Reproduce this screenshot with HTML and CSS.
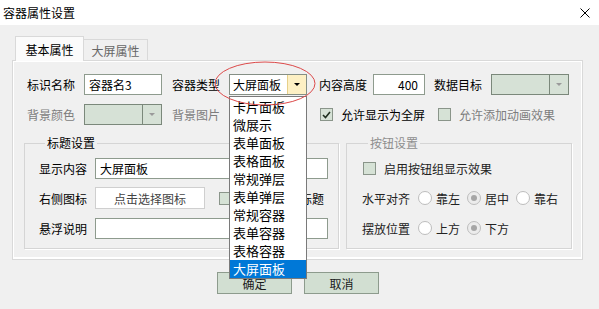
FILE: index.html
```html
<!DOCTYPE html>
<html lang="zh-CN">
<head>
  <meta charset="UTF-8" />
  <title>容器属性设置</title>
  <link rel="stylesheet" href="styles.css">
</head>
<body>
  <div class="titlebar">
    <span>容器属性设置</span>
    <svg class="close" width="10" height="10" viewBox="0 0 10 10"><path d="M0.5 0.5L9.5 9.5M9.5 0.5L0.5 9.5" stroke="#000" stroke-width="1"/></svg>
  </div>

  <div class="dialog">
    <div class="tabs">
      <div class="tab active">基本属性</div>
      <div class="tab">大屏属性</div>
    </div>

    <div class="panel">
      <div class="row">
        <span class="lbl">标识名称</span>
        <input class="field w78 ml9" type="text" value="容器名3" />
        <span class="lbl ml10">容器类型</span>
        <div class="combo open w78 ml9">
          <span class="combo-text">大屏面板</span>
          <span class="combo-btn"><i class="arrow"></i></span>
          <ul class="droplist">
            <li>卡片面板</li>
            <li>微展示</li>
            <li>表单面板</li>
            <li>表格面板</li>
            <li>常规弹层</li>
            <li>表单弹层</li>
            <li>常规容器</li>
            <li>表单容器</li>
            <li>表格容器</li>
            <li class="selected">大屏面板</li>
          </ul>
        </div>
        <span class="lbl ml12">内容高度</span>
        <input class="field num ml6" type="text" value="400" />
        <span class="lbl ml9">数据目标</span>
        <div class="combo disabled w78 ml9">
          <span class="combo-text"></span>
          <span class="combo-btn"><i class="arrow"></i></span>
        </div>
      </div>

      <div class="row row2">
        <span class="lbl muted">背景颜色</span>
        <div class="combo disabled w78 ml9">
          <span class="combo-text"></span>
          <span class="combo-btn"><i class="arrow"></i></span>
        </div>
        <span class="lbl muted ml10">背景图片</span>
        <span class="spacer w78 ml9"></span>
        <span class="chk checked ml13"><svg width="9" height="8" viewBox="0 0 9 8"><path d="M1 4L3.5 6.5L8 1" fill="none" stroke="#1f2f1f" stroke-width="1.6"/></svg></span>
        <span class="ml8">允许显示为全屏</span>
        <span class="chk ml13"></span>
        <span class="muted ml8">允许添加动画效果</span>
      </div>

      <div class="groups">
        <fieldset class="grp grp-title">
          <legend>标题设置</legend>
          <div class="grow">
            <span class="lbl">显示内容</span>
            <input class="field wide ml8" type="text" value="大屏面板" />
          </div>
          <div class="grow">
            <span class="lbl">右侧图标</span>
            <button class="pick ml8">点击选择图标</button>
            <span class="chk ml14"></span>
            <span class="ml8">图标显示在标题</span>
          </div>
          <div class="grow">
            <span class="lbl">悬浮说明</span>
            <input class="field wide ml8" type="text" value="" />
          </div>
        </fieldset>

        <fieldset class="grp grp-btn">
          <legend>按钮设置</legend>
          <div class="grow">
            <span class="chk ml1"></span>
            <span class="ml8">启用按钮组显示效果</span>
          </div>
          <div class="grow">
            <span class="lbl">水平对齐</span>
            <span class="opt first"><span class="radio"></span>靠左</span>
            <span class="opt"><span class="radio on"></span>居中</span>
            <span class="opt"><span class="radio"></span>靠右</span>
          </div>
          <div class="grow">
            <span class="lbl">摆放位置</span>
            <span class="opt first"><span class="radio"></span>上方</span>
            <span class="opt"><span class="radio on"></span>下方</span>
          </div>
        </fieldset>
      </div>
    </div>

    <div class="actions">
      <button class="btn">确定</button>
      <button class="btn">取消</button>
    </div>
  </div>

  <!-- 标注圈 -->
  <svg class="mark" width="599" height="309" viewBox="0 0 599 309">
    <ellipse cx="265" cy="83.5" rx="50" ry="21.5" fill="none" stroke="#dc4a4a" stroke-width="1"/>
  </svg>
</body>
</html>
```

FILE: styles.css
```css
body {
  margin: 0;
  width: 599px;
  height: 309px;
  overflow: hidden;
  position: relative;
  background: #f0f0f0;
  color: #000;
  font-family: "Noto Sans CJK SC", "Microsoft YaHei", sans-serif;
  font-size: 12px;
}
input, button {
  font: inherit;
  margin: 0;
}
.titlebar {
  height: 25px;
  background: #fff;
  display: flex;
  align-items: center;
  justify-content: space-between;
  padding: 0 9px 0 3px;
}
.dialog {
  padding: 11px 16px 0 12px;
}
.tabs {
  display: flex;
  align-items: flex-end;
  height: 24px;
  padding-left: 3px;
}
.tab {
  box-sizing: border-box;
  width: 65px;
  height: 21px;
  margin-left: -1px;
  border: 1px solid #d9d9d9;
  border-bottom: none;
  background: #f0f0f0;
  color: #666;
  display: flex;
  align-items: center;
  justify-content: center;
}
.tab.active {
  width: 69px;
  height: 25px;
  margin-left: 0;
  margin-bottom: -1px;
  background: #fbfbfb;
  color: #000;
  position: relative;
  z-index: 1;
}
.panel {
  box-sizing: border-box;
  height: 200px;
  border: 1px solid #d9d9d9;
  box-shadow: inset 1px 1px 0 #fff, inset -1px -2px 0 #fff;
  padding: 13px 0 0 11px;
}
.row {
  display: flex;
  align-items: center;
  height: 21px;
  padding-left: 3px;
  white-space: nowrap;
}
.row2 {
  margin-top: 9px;
}
.lbl {
  width: 48px;
  flex: none;
}
.muted { color: #7d7d7d; }
.ml1 { margin-left: 1px; }
.ml6 { margin-left: 6px; }
.ml8 { margin-left: 8px; }
.ml9 { margin-left: 9px; }
.ml10 { margin-left: 10px; }
.ml12 { margin-left: 12px; }
.ml13 { margin-left: 13px; }
.ml14 { margin-left: 14px; }
.w78 { width: 78px; flex: none; }
.spacer { height: 21px; }
.field {
  box-sizing: border-box;
  height: 21px;
  border: 1px solid #8e9b8e;
  background: #fff;
  padding: 0 4px;
  outline: none;
}
.field.num {
  width: 52px;
  text-align: right;
  padding-right: 6px;
}
.field.wide {
  width: 233px;
}
.combo {
  box-sizing: border-box;
  height: 21px;
  border: 1px solid #858f85;
  display: flex;
  position: relative;
  background: #fff;
}
.combo-text {
  flex: 1;
  padding-left: 3px;
  line-height: 19px;
}
.combo-btn {
  width: 18px;
  border-left: 1px solid #858f85;
  display: flex;
  align-items: center;
  justify-content: center;
}
.arrow {
  width: 0;
  height: 0;
  border-left: 3px solid transparent;
  border-right: 3px solid transparent;
  border-top: 3px solid #000;
}
.combo.open .combo-btn {
  background: #fdf0c4;
  border-left-color: #e6d08a;
}
.combo.disabled {
  background: #d6e1d6;
  border-color: #7b887b;
}
.combo.disabled .combo-btn {
  border-left-color: #7b887b;
}
.combo.disabled .arrow {
  border-top-color: #9a9a9a;
}
.droplist {
  position: absolute;
  top: 21px;
  left: -1px;
  width: 78px;
  box-sizing: border-box;
  margin: 0;
  padding: 1px 0 0;
  list-style: none;
  background: #fff;
  border: 1px solid #7a7a7a;
  z-index: 5;
}
.droplist li {
  height: 18px;
  line-height: 18px;
  padding-left: 3px;
  font-size: 13px;
}
.droplist .selected {
  background: #0078d7;
  color: #fff;
}
.chk {
  box-sizing: border-box;
  width: 13px;
  height: 13px;
  flex: none;
  border: 1px solid #8a958a;
  background: #d6e2d6;
  display: inline-flex;
  align-items: center;
  justify-content: center;
}
.groups {
  display: flex;
  gap: 7px;
  margin-top: 8px;
}
.grp {
  box-sizing: border-box;
  height: 116px;
  margin: 0;
  padding: 4px 0 0 14px;
  border: 1px solid #d5d5d5;
  box-shadow: 1px 1px 0 #fff;
  min-width: 0;
}
.grp legend {
  margin-left: 6px;
  padding: 0 2px;
  line-height: 20px;
}
.grp-title { width: 315px; }
.grp-btn {
  width: 226px;
  padding-left: 15px;
  color: #222;
}
.grp-btn legend { color: #8e8e8e; }
.grow {
  display: flex;
  align-items: center;
  height: 22px;
  margin-bottom: 8px;
  white-space: nowrap;
}
.pick {
  box-sizing: border-box;
  width: 110px;
  height: 22px;
  background: #fff;
  border: 1px solid #cfcfcf;
  color: #444;
  padding: 0;
}
.opt {
  display: inline-flex;
  align-items: center;
  gap: 4px;
  margin-left: 7px;
}
.opt.first { margin-left: 8px; }
.radio {
  box-sizing: border-box;
  width: 14px;
  height: 14px;
  border: 1px solid #bdbdbd;
  border-radius: 50%;
  background: #fff;
  display: inline-flex;
  align-items: center;
  justify-content: center;
}
.radio.on {
  background: #ececec;
}
.radio.on::after {
  content: "";
  width: 6px;
  height: 6px;
  border-radius: 50%;
  background: #a6a6a6;
}
.actions {
  display: flex;
  justify-content: center;
  gap: 12px;
  margin-top: 12px;
  padding-left: 1px;
}
.btn {
  box-sizing: border-box;
  width: 75px;
  height: 22px;
  background: #d2dfd2;
  border: 1px solid #8d9b8d;
  color: #1a1a1a;
  padding: 0;
}
.mark {
  position: absolute;
  left: 0;
  top: 0;
  pointer-events: none;
  z-index: 10;
}
```
